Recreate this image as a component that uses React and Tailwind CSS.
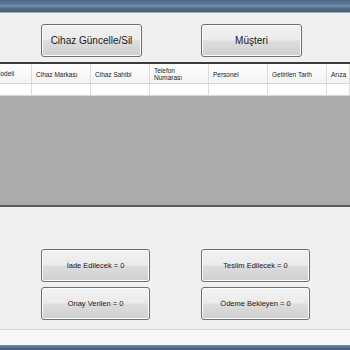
import React from "react";

const columns = ["Modeli", "Cihaz Markası", "Cihaz Sahibi", "Telefon Numarası", "Personel", "Getirilen Tarih", "Arıza"];

const WinButton = ({ children, className = "" }) => (
  <button
    className={
      "rounded-[3px] border border-[#707070] bg-[linear-gradient(#f2f2f2_0%,#ebebeb_48%,#dddddd_52%,#cfcfcf_100%)] text-[#1a1a1a] shadow-[inset_0_0_0_1px_#fcfcfc] " +
      className
    }
  >
    {children}
  </button>
);

const App = () => {
  return (
    <div className="w-[350px] h-[350px] overflow-hidden bg-[#f0f0f0] flex flex-col font-['Liberation_Sans',Arial,sans-serif]">
      {/* title bar */}
      <div className="h-[13px] shrink-0 bg-[linear-gradient(#4a6786_0%,#5d7a99_35%,#7891ad_50%,#4f6c8b_70%,#47627f_100%)] border-b border-[#9aaabb]" />

      {/* top buttons */}
      <div className="flex pl-[41px] gap-[59px] pt-[11px] h-[49px] shrink-0">
        <WinButton className="w-[101px] h-[33px] text-[10px]">Cihaz Güncelle/Sil</WinButton>
        <WinButton className="w-[101px] h-[33px] text-[10px]">Müşteri</WinButton>
      </div>

      {/* grid */}
      <div className="h-[145px] shrink-0 flex flex-col border-t-2 border-[#3c3c3c] border-b-2 border-b-[#5a5a5a] bg-[#ababab]">
        <div className="flex h-[20px] bg-[linear-gradient(#ffffff,#f3f3f3)] border-b border-[#d5d5d5]">
          {columns.map((c, i) => (
            <div
              key={c}
              className={
                "h-full overflow-hidden border-r border-[#dcdcdc] flex items-center text-[6.5px] leading-[7px] text-[#222] " +
                (i === 0 ? "w-[32px] shrink-0" : i === 6 ? "flex-1 pl-[4px]" : "w-[59px] shrink-0 pl-[4px]")
              }
            >
              <span className={i === 0 ? "ml-[-5px] whitespace-nowrap" : i === 3 ? "w-[34px] pt-[1px]" : "whitespace-nowrap pt-[1px]"}>{c}</span>
            </div>
          ))}
        </div>
        <div className="flex h-[12px] bg-white border-b border-[#d5d5d5]">
          {columns.map((c, i) => (
            <div
              key={c}
              className={
                "h-full border-r border-[#dcdcdc] " +
                (i === 0 ? "w-[32px] shrink-0" : i === 6 ? "flex-1" : "w-[59px] shrink-0")
              }
            />
          ))}
        </div>
        <div className="flex-1" />
      </div>

      {/* bottom panel */}
      <div className="h-[123px] shrink-0 border-b border-[#d8d8d8] pt-[42px] pl-[41px]">
        <div className="grid grid-cols-[109px_109px] gap-x-[51px] gap-y-[5px]">
          <WinButton className="h-[33px] text-[7.5px]">İade Edilecek = 0</WinButton>
          <WinButton className="h-[33px] text-[7.5px]">Teslim Edilecek = 0</WinButton>
          <WinButton className="h-[33px] text-[7.5px]">Onay Verilen = 0</WinButton>
          <WinButton className="h-[33px] text-[7.5px]">Ödeme Bekleyen = 0</WinButton>
        </div>
      </div>

      <div className="h-[15px] shrink-0 bg-[#f7f7f7]" />
      <div className="flex-1 bg-[linear-gradient(#6f8aa6,#3e5873)]" />
    </div>
  );
};

export default App;
